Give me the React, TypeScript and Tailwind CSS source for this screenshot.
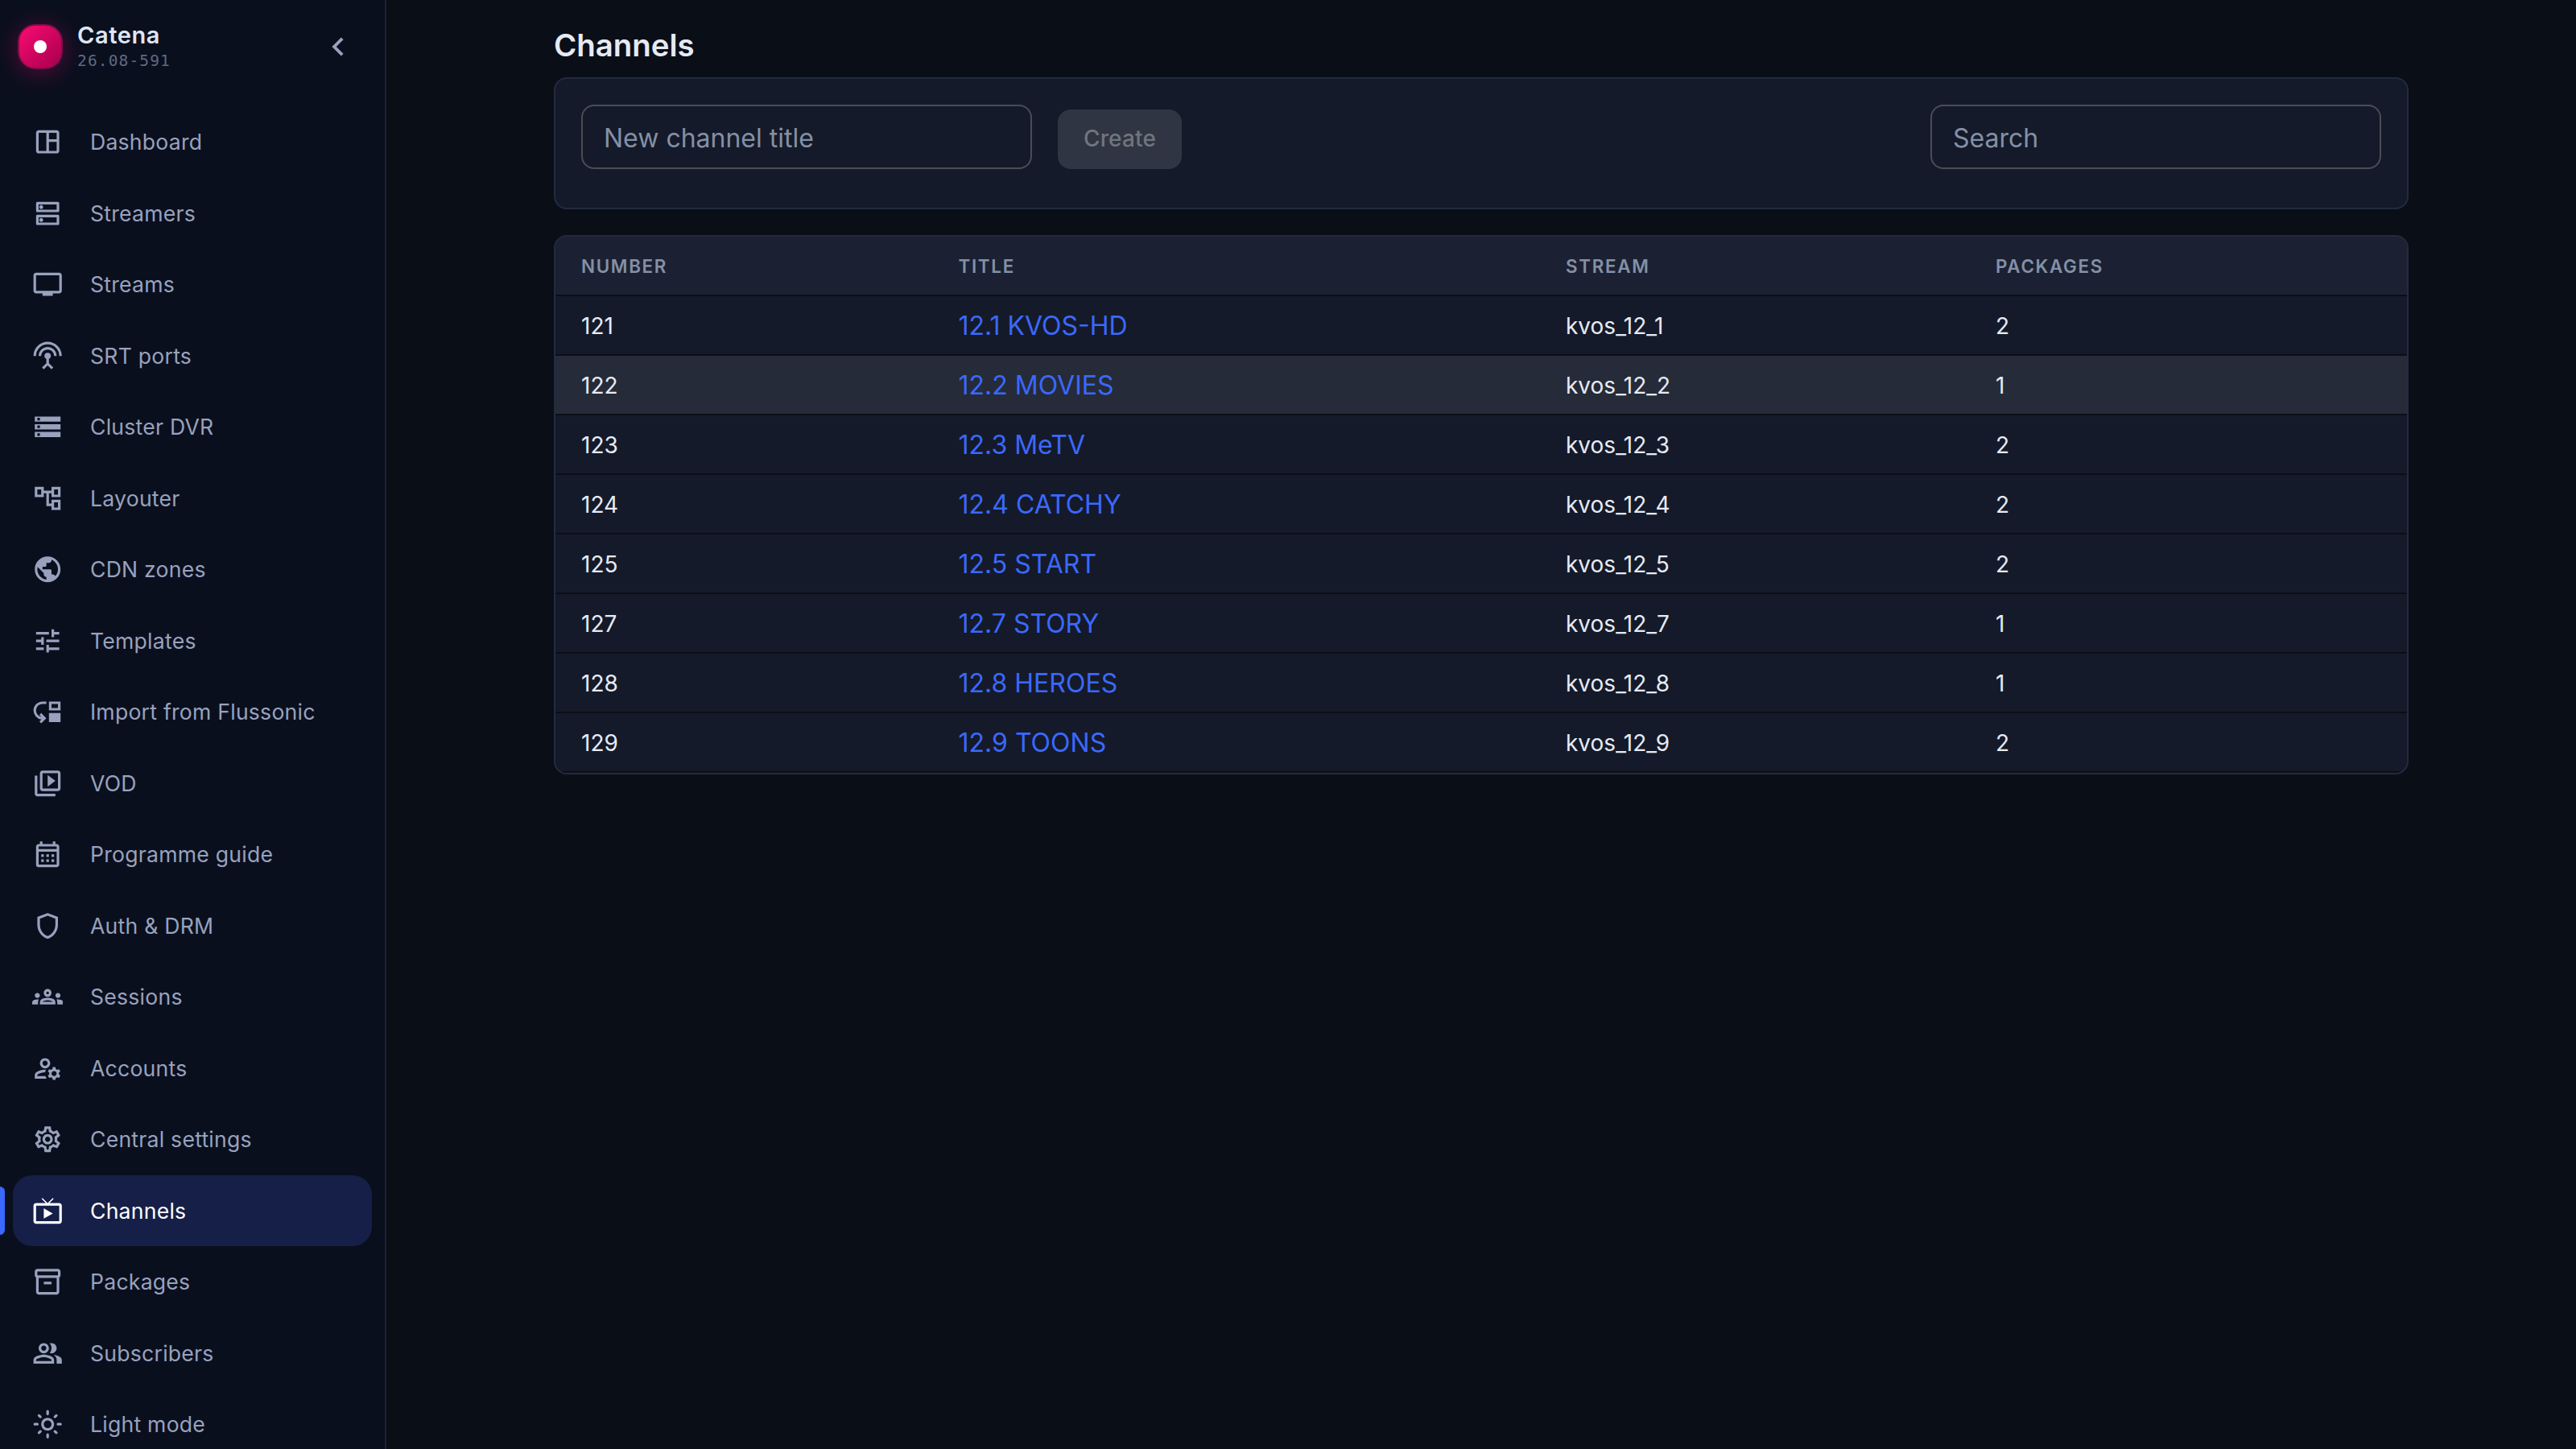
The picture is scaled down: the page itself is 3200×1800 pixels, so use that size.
import React from "react";
import clsx from "clsx";
import type { IconType } from "react-icons";
import {
  MdChevronLeft,
  MdMoveDown,
  MdOutlineAccountTree,
  MdOutlineCalendarMonth,
  MdOutlineDns,
  MdOutlineGroups,
  MdOutlineInventory2,
  MdOutlineLightMode,
  MdOutlineLiveTv,
  MdOutlineManageAccounts,
  MdOutlinePeopleAlt,
  MdOutlineSettings,
  MdOutlineShield,
  MdOutlineSpaceDashboard,
  MdOutlineTv,
  MdOutlineVideoLibrary,
  MdPublic,
  MdSettingsInputAntenna,
  MdStorage,
  MdTune,
} from "react-icons/md";

interface NavItem {
  label: string;
  icon: IconType;
}

interface Channel {
  number: number;
  title: string;
  stream: string;
  packages: number;
}

const navItems: NavItem[] = [
  { label: "Dashboard", icon: MdOutlineSpaceDashboard },
  { label: "Streamers", icon: MdOutlineDns },
  { label: "Streams", icon: MdOutlineTv },
  { label: "SRT ports", icon: MdSettingsInputAntenna },
  { label: "Cluster DVR", icon: MdStorage },
  { label: "Layouter", icon: MdOutlineAccountTree },
  { label: "CDN zones", icon: MdPublic },
  { label: "Templates", icon: MdTune },
  { label: "Import from Flussonic", icon: MdMoveDown },
  { label: "VOD", icon: MdOutlineVideoLibrary },
  { label: "Programme guide", icon: MdOutlineCalendarMonth },
  { label: "Auth & DRM", icon: MdOutlineShield },
  { label: "Sessions", icon: MdOutlineGroups },
  { label: "Accounts", icon: MdOutlineManageAccounts },
  { label: "Central settings", icon: MdOutlineSettings },
  { label: "Channels", icon: MdOutlineLiveTv },
  { label: "Packages", icon: MdOutlineInventory2 },
  { label: "Subscribers", icon: MdOutlinePeopleAlt },
  { label: "Light mode", icon: MdOutlineLightMode },
];

const channels: Channel[] = [
  { number: 121, title: "12.1 KVOS-HD", stream: "kvos_12_1", packages: 2 },
  { number: 122, title: "12.2 MOVIES", stream: "kvos_12_2", packages: 1 },
  { number: 123, title: "12.3 MeTV", stream: "kvos_12_3", packages: 2 },
  { number: 124, title: "12.4 CATCHY", stream: "kvos_12_4", packages: 2 },
  { number: 125, title: "12.5 START", stream: "kvos_12_5", packages: 2 },
  { number: 127, title: "12.7 STORY", stream: "kvos_12_7", packages: 1 },
  { number: 128, title: "12.8 HEROES", stream: "kvos_12_8", packages: 1 },
  { number: 129, title: "12.9 TOONS", stream: "kvos_12_9", packages: 2 },
];

const gridCols = "grid grid-cols-[468.5px_754.5px_534px_1fr] items-center";

function Logo() {
  return (
    <div className="flex size-14 shrink-0 items-center justify-center rounded-[22px] border-2 border-[#7d0f48] bg-linear-135 from-[#ff0d73] to-[#a3004c] bg-origin-border shadow-[0_4px_28px_rgba(255,0,110,0.32)]">
      <span className="size-4 rounded-full bg-white" />
    </div>
  );
}

function Sidebar({ active }: { active: string }) {
  return (
    <aside className="h-full w-[480px] shrink-0 overflow-hidden border-r-2 border-[#1d2130] bg-[#0a0f1e]">
      <div className="flex h-[116px] items-center pl-[22px] pr-[35px]">
        <Logo />
        <div className="ml-[18px] flex-1">
          <p className="text-[29px] font-semibold leading-[32px] tracking-[0.6px] text-[#dfe5f5]">
            Catena
          </p>
          <p className="mt-1 font-['DejaVu_Sans_Mono',monospace] text-[19.5px] leading-[24px] tracking-[1.15px] text-[#5f6982]">
            26.08-591
          </p>
        </div>
        <button type="button" aria-label="Collapse menu" className="text-[#98a2bd]">
          <MdChevronLeft size={46} />
        </button>
      </div>

      <nav className="pt-[16.25px]">
        {navItems.map(({ label, icon: Icon }) => {
          const isActive = label === active;
          return (
            <a key={label} className="relative block h-[88.5px] px-4">
              {isActive && (
                <span className="absolute left-0 top-[14px] h-[60px] w-1.5 rounded-r-md bg-[#3b68ff]" />
              )}
              <span
                className={clsx(
                  "flex h-full items-center gap-[33.6px] rounded-3xl pl-6 text-[26.6px] tracking-[0.009em]",
                  isActive ? "bg-[#151f47] text-white" : "text-[#98a2bd]"
                )}
              >
                <Icon size={38.4} className="shrink-0" />
                <span className="pt-px">{label}</span>
              </span>
            </a>
          );
        })}
      </nav>
    </aside>
  );
}

function TextField({ placeholder }: { placeholder: string }) {
  return (
    <input
      type="text"
      placeholder={placeholder}
      className="h-20 w-[560px] rounded-2xl border-2 border-[#4b4d55] bg-transparent px-[26px] pt-0.5 text-[32px] text-[#e6eaf5] outline-none placeholder:text-[#8490a6]"
    />
  );
}

function ChannelTable({ hovered }: { hovered: number }) {
  return (
    <section className="mt-8 overflow-hidden rounded-2xl border-2 border-[#232b40] bg-[#141a29]">
      <div
        className={clsx(
          gridCols,
          "h-[74px] border-b-2 border-[#0b0e15] bg-[#1b2132] pt-px text-[22.4px] font-semibold uppercase tracking-[0.075em] text-[#8490a6]"
        )}
      >
        <span className="pl-8">Number</span>
        <span className="pl-8">Title</span>
        <span className="pl-8">Stream</span>
        <span className="pl-8">Packages</span>
      </div>
      {channels.map((channel) => (
        <div
          key={channel.number}
          className={clsx(
            gridCols,
            "h-[74px] border-b-2 border-[#0b0e15] pt-px text-[28px] text-[#e6eaf5]",
            channel.number === hovered && "bg-[#252b38]"
          )}
        >
          <span className="pl-8">{channel.number}</span>
          <a className="pl-8 pt-px text-[32px] text-[#3b68ff]">{channel.title}</a>
          <span className="pl-8">{channel.stream}</span>
          <span className="pl-8">{channel.packages}</span>
        </div>
      ))}
    </section>
  );
}

export default function App() {
  return (
    <div className="flex h-screen overflow-hidden bg-[#0a0e17] font-['Inter',sans-serif]">
      <Sidebar active="Channels" />

      <main className="flex flex-1 justify-center">
        <div className="w-[2304px] pt-4">
          <h1 className="flex h-20 items-center pt-0.5 text-[38.4px] font-semibold text-[#e6eaf5]">
            Channels
          </h1>

          <section className="flex h-[164px] items-start rounded-2xl border-2 border-[#232b40] bg-[#141a29] p-8">
            <TextField placeholder="New channel title" />
            <button
              type="button"
              disabled
              className="ml-8 mt-1.5 flex h-[74px] w-[154px] items-center justify-center rounded-2xl bg-[#2f3542] pb-0.5 text-[28px] font-medium tracking-[0.14px] text-[#70757e]"
            >
              Create
            </button>
            <div className="ml-auto">
              <TextField placeholder="Search" />
            </div>
          </section>

          <ChannelTable hovered={122} />
        </div>
      </main>
    </div>
  );
}
